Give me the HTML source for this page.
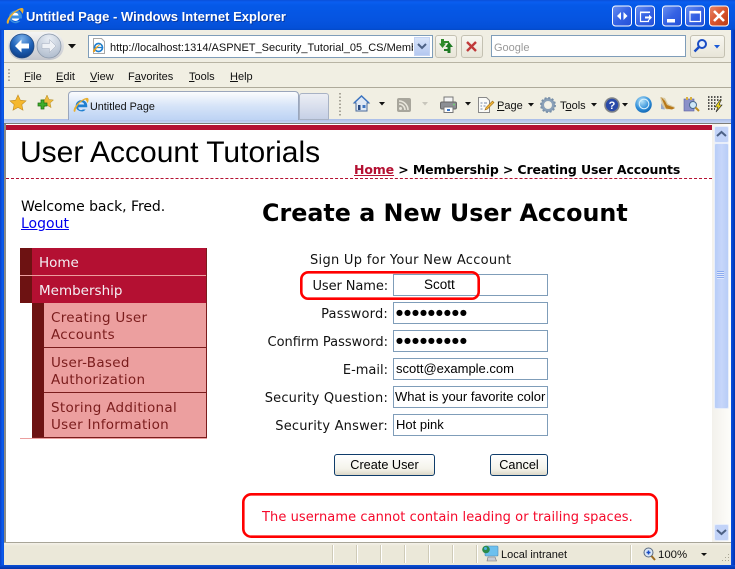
<!DOCTYPE html>
<html><head><meta charset="utf-8"><title>Untitled Page - Windows Internet Explorer</title>
<style>
html,body{margin:0;padding:0;background:#fff}
#w{position:relative;width:735px;height:569px;overflow:hidden;background:#fff;font-family:"Liberation Sans",sans-serif}
.a{position:absolute;white-space:nowrap}
.ui{font:11px/14px "Liberation Sans",sans-serif;color:#111}
.v{font-family:"DejaVu Sans",sans-serif;font-size:13px;line-height:17px;white-space:nowrap;position:absolute}
.lb{right:347px;color:#111}
.in{position:absolute;left:393px;width:153px;height:20px;border:1px solid #7f9db9;background:#fff;font:13px/20px "Liberation Sans",sans-serif;color:#000;white-space:nowrap;overflow:hidden}
.btn{position:absolute;top:454px;height:20px;border:1px solid #0f3d6b;border-radius:3px;background:linear-gradient(#fff,#f4f3ea 70%,#dcd8c8);font:12.7px/20px "Liberation Sans",sans-serif;text-align:center;color:#000}
.nav{position:absolute;font-family:"DejaVu Sans",sans-serif;font-size:13.5px;line-height:17px;color:#7a1c1c;white-space:nowrap;letter-spacing:.3px}
u{text-decoration:underline}
.dots{letter-spacing:1px;font-size:8px;line-height:20px;vertical-align:top}
.sep{position:absolute;top:545px;width:1px;height:18px;background:#fff;border-left:1px solid #cfcbb8}
svg{position:absolute;overflow:visible}
</style></head><body><div id="w">

<!-- Title bar -->
<div class="a" style="left:0;top:0;width:735px;height:30px;background:linear-gradient(#0a50d8 0,#0a5ef0 2px,#0559e8 5px,#0654e0 20px,#0450d8 28px,#0349c8 100%)"></div>
<svg style="left:6px;top:7px" width="18" height="18" viewBox="0 0 18 18"><circle cx="9.500" cy="9.500" r="4.500" fill="#fff"/><path d="M9.500 3.500a6.500 6.500 0 0 0-6.500 6.500A6.500 6.500 0 0 0 14.300 14h-3.300a3 3 0 0 1-5-2.500h10V10A6.300 6.300 0 0 0 9.500 3.500zM6.300 8.500a3.200 3.200 0 0 1 6.300 0z" fill="#3a8fe0"/><path d="M1 16.500C-1 12 9 2 15.500 1c2.500-.5 2.500 3 1 6-.5-1.500-1.500-3-2.500-3.800C15 2.500 15 2.500 13 3.200 8 5 3.500 11 2.800 15.500c0 1-1 1.500-1.800 1z" fill="#eab030"/></svg>
<div class="a" style="left:26px;top:9px;font:bold 13px/16px 'Liberation Sans',sans-serif;color:#fff;letter-spacing:.02px;text-shadow:1px 1px 0 #0a3aa0">Untitled Page - Windows Internet Explorer</div>

<!-- Window buttons -->
<svg style="left:612px;top:5px" width="120" height="22" viewBox="0 0 120 22">
<defs><linearGradient id="bb" x1="0" y1="0" x2="1" y2="1"><stop offset="0" stop-color="#6a90f0"/><stop offset=".5" stop-color="#3562e4"/><stop offset="1" stop-color="#2450d8"/></linearGradient>
<linearGradient id="rb" x1="0" y1="0" x2="1" y2="1"><stop offset="0" stop-color="#e8866a"/><stop offset=".5" stop-color="#d8552e"/><stop offset="1" stop-color="#b83a14"/></linearGradient></defs>
<rect x=".5" y="1" width="19" height="20" rx="3" fill="url(#bb)" stroke="#fff"/>
<path d="M9 7v8l-4-4zM11.500 7v8l4-4z" fill="#fff"/>
<rect x="23.500" y="1" width="19" height="20" rx="3" fill="url(#bb)" stroke="#fff"/>
<path d="M28.500 7.500h9M28.500 7.500v9h8v-2" fill="none" stroke="#fff" stroke-width="1.200"/><path d="M28 6.500h10v1.500H28z" fill="#fff"/><path d="M33 11.500h4v-2l3 3-3 3v-2h-4z" fill="#fff"/>
<rect x="50.500" y="1" width="19" height="20" rx="3" fill="url(#bb)" stroke="#fff"/>
<rect x="55" y="14" width="8" height="3.500" fill="#fff"/>
<rect x="73.500" y="1" width="19" height="20" rx="3" fill="url(#bb)" stroke="#fff"/>
<path d="M78 6.500h10.500v10H78z" fill="none" stroke="#fff" stroke-width="1.200"/><rect x="78" y="6" width="10.500" height="2.500" fill="#fff"/>
<rect x="97.500" y="1" width="19" height="20" rx="3" fill="url(#rb)" stroke="#fff"/>
<path d="M102 6l10 10M112 6l-10 10" stroke="#fff" stroke-width="2.600"/>
</svg>

<!-- Chrome background -->
<div class="a" style="left:4px;top:30px;width:727px;height:32px;background:#f0eee3"></div>
<div class="a" style="left:4px;top:62px;width:727px;height:1px;background:#b8b4a4"></div>
<div class="a" style="left:4px;top:63px;width:727px;height:24px;background:#f1efe3"></div>
<div class="a" style="left:4px;top:87px;width:727px;height:1px;background:#aeaa9a"></div>
<div class="a" style="left:4px;top:88px;width:727px;height:31px;background:#f1efe3"></div>
<div class="a" style="left:4px;top:119px;width:727px;height:4px;background:linear-gradient(#a9bde8,#c8d6f4)"></div>
<div class="a" style="left:4px;top:123px;width:727px;height:1px;background:#7d7d78"></div>

<!-- Window borders -->
<div class="a" style="left:0;top:30px;width:4px;height:539px;background:linear-gradient(90deg,#0a3fc4,#0a5cf0 60%,#0a50d8)"></div>
<div class="a" style="left:4px;top:124px;width:2px;height:420px;background:#8b8b86"></div>
<div class="a" style="left:731px;top:30px;width:4px;height:539px;background:linear-gradient(90deg,#0a50e0,#0232b0)"></div>
<div class="a" style="left:0;top:565px;width:735px;height:4px;background:linear-gradient(#0a50d8,#0232a8)"></div>

<!-- Back/forward -->
<div class="a" style="left:8px;top:32px;width:56px;height:28px;border-radius:14px;background:linear-gradient(#f4f4f4,#c4c6cc)"></div>
<svg style="left:9px;top:33px" width="55" height="27" viewBox="0 0 55 27">
<defs><radialGradient id="bk" cx=".5" cy=".2" r=".9"><stop offset="0" stop-color="#7ab0ea"/><stop offset=".5" stop-color="#1f62b8"/><stop offset="1" stop-color="#0a3478"/></radialGradient>
<radialGradient id="fw" cx=".5" cy=".2" r=".9"><stop offset="0" stop-color="#e8edf4"/><stop offset="1" stop-color="#a9b6c8"/></radialGradient></defs>
<circle cx="13" cy="13" r="12" fill="url(#bk)" stroke="#234a80" stroke-width=".8"/>
<path d="M6 13l6.500-6.500v4H20v5h-7.500v4z" fill="#fff"/>
<circle cx="40" cy="13" r="12" fill="url(#fw)" stroke="#8a98aa" stroke-width=".8"/>
<path d="M47 13l-6.500-6.500v4H33v5h7.500v4z" fill="#eef1f5" stroke="#a0aabc" stroke-width=".5"/>
</svg>
<svg style="left:68px;top:44px" width="10" height="6"><path d="M0 0h8L4 4.500z" fill="#111"/></svg>

<!-- Address bar -->
<div class="a" style="left:88px;top:35px;width:343px;height:21px;border:1px solid #7f9db9;background:#fff"></div>
<svg style="left:91px;top:38px" width="16" height="16" viewBox="0 0 16 16"><path d="M2.500.5h8l3 3v12h-11z" fill="#fff" stroke="#a8a8a8"/><circle cx="7.500" cy="9.500" r="4" fill="none" stroke="#1f7fd0" stroke-width="1.700"/><path d="M4 9.500h7" stroke="#1f7fd0" stroke-width="1.300"/><path d="M2 14c-.5-2.500 5-7.500 8.500-8-3 1.500-5.500 5-6.800 8z" fill="#e8a020"/></svg>
<div class="a ui" style="left:110px;top:41px;width:303px;overflow:hidden;font-size:11px">http://localhost:1314/ASPNET_Security_Tutorial_05_CS/Membership/CreatingUserAccounts.aspx</div>
<div class="a" style="left:414px;top:37px;width:16px;height:19px;background:linear-gradient(#d8e4fa,#b4c8f0);border:1px solid #c3d3f3;box-sizing:border-box"></div>
<svg style="left:417px;top:43px" width="10" height="8"><path d="M1 1l4 4 4-4" fill="none" stroke="#4d6185" stroke-width="2"/></svg>
<!-- refresh/stop -->
<div class="a" style="left:435px;top:35px;width:20px;height:21px;border:1px solid #c4c1b2;border-radius:3px;background:linear-gradient(#f8f7f1,#e8e5d8)"></div>
<svg style="left:438px;top:38px" width="16" height="16" viewBox="0 0 16 16"><path d="M3 1h3v2h5v2H6.500v.5H8L4.500 10 1 5.500h2z" fill="#2f8a2a"/><path d="M11 4l4 5h-2.500v6h-3V13H6v-2h3.500V9H7.500z" fill="#1f7a24"/></svg>
<div class="a" style="left:461px;top:35px;width:20px;height:21px;border:1px solid #c4c1b2;border-radius:3px;background:linear-gradient(#f8f7f1,#e8e5d8)"></div>
<svg style="left:466px;top:41px" width="12" height="12"><path d="M1 1l9 9M10 1l-9 9" stroke="#c03a3a" stroke-width="2.400"/></svg>
<!-- Search -->
<div class="a" style="left:491px;top:35px;width:193px;height:20px;border:1px solid #7f9db9;background:#fff"></div>
<div class="a ui" style="left:494px;top:41px;color:#9a9a9a;font-size:11px">Google</div>
<div class="a" style="left:690px;top:35px;width:20px;height:21px;border:1px solid #c4c1b2;border-radius:3px 0 0 3px;background:linear-gradient(#f8f7f1,#e8e5d8)"></div>
<div class="a" style="left:711px;top:35px;width:13px;height:21px;border:1px solid #c4c1b2;border-left:0;border-radius:0 3px 3px 0;background:linear-gradient(#f8f7f1,#e8e5d8)"></div>
<svg style="left:693px;top:38px" width="15" height="15" viewBox="0 0 15 15"><circle cx="9" cy="6" r="4" fill="#e8f0fc" stroke="#1a4cc4" stroke-width="2"/><path d="M6 9l-4.500 4.500" stroke="#1a4cc4" stroke-width="2.400"/></svg>
<svg style="left:714px;top:45px" width="8" height="5"><path d="M0 0h6L3 3.500z" fill="#1a5ad8"/></svg>

<!-- Menu row -->
<svg style="left:8px;top:69px" width="3" height="15"><path d="M1 0v14" stroke="#a8a498" stroke-width="2" stroke-dasharray="1.500 2"/></svg>
<div class="a ui" style="left:24px;top:70px"><u>F</u>ile</div>
<div class="a ui" style="left:56px;top:70px"><u>E</u>dit</div>
<div class="a ui" style="left:90px;top:70px"><u>V</u>iew</div>
<div class="a ui" style="left:128px;top:70px">F<u>a</u>vorites</div>
<div class="a ui" style="left:189px;top:70px"><u>T</u>ools</div>
<div class="a ui" style="left:230px;top:70px"><u>H</u>elp</div>

<!-- Tab row -->
<svg style="left:10px;top:95px" width="16" height="16" viewBox="0 0 16 16"><path d="M8 0l2.400 5.200 5.600.6-4.200 3.800 1.200 5.600L8 12.400 3 15.200l1.200-5.600L0 5.800l5.600-.6z" fill="#f5b82e" stroke="#c08a20" stroke-width=".6"/></svg>
<svg style="left:37px;top:95px" width="17" height="16" viewBox="0 0 17 16"><path d="M10 0l2 4.500 4.500.5-3.400 3 1 4.600L10 10.200 6 12.600l1-4.600-3.400-3L8 4.500z" fill="#eeb93a" stroke="#b08a20" stroke-width=".5"/><path d="M4 5h3v3h3v3H7v3H4v-3H1V8h3z" fill="#3fae2a" stroke="#1d6e12" stroke-width=".7"/></svg>
<div class="a" style="left:68px;top:91px;width:229px;height:28px;border:1px solid #9aa6bc;border-bottom:0;border-radius:4px 4px 0 0;background:linear-gradient(#fbfcfe,#d6e4f8 50%,#bdd3f4)"></div>
<svg style="left:73px;top:97px" width="16" height="16" viewBox="0 0 18 18"><path d="M9.500 3.500a6.500 6.500 0 0 0-6.500 6.500A6.500 6.500 0 0 0 14.300 14h-3.300a3 3 0 0 1-5-2.500h10V10A6.300 6.300 0 0 0 9.500 3.500zM6.300 8.500a3.200 3.200 0 0 1 6.300 0z" fill="#1f7fd0"/><path d="M1 16.500C-1 12 9 2 15.500 1c2.500-.5 2.500 3 1 6-.5-1.500-1.500-3-2.500-3.800C15 2.500 15 2.500 13 3.200 8 5 3.500 11 2.800 15.500c0 1-1 1.500-1.800 1z" fill="#e8b030"/></svg>
<div class="a ui" style="left:90px;top:100px;font-size:10.8px">Untitled Page</div>
<div class="a" style="left:299px;top:93px;width:28px;height:25px;border:1px solid #a8b2c4;border-radius:3px 3px 0 0;background:linear-gradient(#eceef4,#c6d0e6)"></div>
<svg style="left:339px;top:93px" width="3" height="24"><path d="M1 0v24" stroke="#a8a498" stroke-width="2" stroke-dasharray="1.500 2"/></svg>

<!-- Right toolbar icons -->
<svg style="left:353px;top:95px" width="17" height="17" viewBox="0 0 17 17"><path d="M8.500 1L1 8h2v8h11V8h2z" fill="#dfe8f4" stroke="#4a6a9a"/><path d="M1 8l7.500-7L16 8" fill="none" stroke="#3c74c0" stroke-width="1.500"/><rect x="5" y="10" width="2.500" height="5" fill="#2a4a80"/><rect x="9.500" y="10" width="3" height="3" fill="#3c74c0"/></svg>
<svg style="left:379px;top:102px" width="7" height="5"><path d="M0 0h6L3 3.500z" fill="#111"/></svg>
<svg style="left:397px;top:98px" width="14" height="14" viewBox="0 0 14 14"><rect width="14" height="14" rx="2" fill="#a8a69c"/><circle cx="3.500" cy="10.500" r="1.500" fill="#e8e6dc"/><path d="M2 6a6 6 0 0 1 6 6M2 3a9 9 0 0 1 9 9" fill="none" stroke="#e8e6dc" stroke-width="1.600"/></svg>
<svg style="left:422px;top:102px" width="7" height="5"><path d="M0 0h6L3 3.500z" fill="#c8c6bc"/></svg>
<svg style="left:440px;top:97px" width="17" height="16" viewBox="0 0 17 16"><rect x="4" y="0" width="9" height="5" fill="#f4f4f4" stroke="#777"/><rect x=".5" y="5" width="16" height="7" rx="1.500" fill="#8c8f94" stroke="#666"/><rect x="4" y="10" width="9" height="5.500" fill="#fff" stroke="#777"/><circle cx="14" cy="7.500" r=".9" fill="#6de06d"/><rect x="7" y="12" width="3" height="2" fill="#3b78c8"/></svg>
<svg style="left:465px;top:102px" width="7" height="5"><path d="M0 0h6L3 3.500z" fill="#111"/></svg>
<svg style="left:478px;top:97px" width="17" height="16" viewBox="0 0 17 16"><path d="M.5.500h8l3 3v12H.5z" fill="#fbfbf8" stroke="#8a8a8a"/><path d="M2.500 6h2M6 6h3M2.500 9h1.500M5.500 9h2M2.500 12h2" stroke="#7a8aa8"/><path d="M7 13l1-2.500L14.500 4l1.500 1.500L9.500 12z" fill="#f0b63c" stroke="#a06a10" stroke-width=".6"/></svg>
<div class="a ui" style="left:497px;top:99px"><u>P</u>age</div>
<svg style="left:528px;top:103px" width="7" height="5"><path d="M0 0h6L3 3.500z" fill="#111"/></svg>
<svg style="left:540px;top:97px" width="16" height="16" viewBox="0 0 16 16"><circle cx="8" cy="8" r="5.500" fill="none" stroke="#8aa0b8" stroke-width="3"/><circle cx="8" cy="8" r="7" fill="none" stroke="#7a90a8" stroke-width="2" stroke-dasharray="2 1.660"/><circle cx="8" cy="8" r="3" fill="#f4f2e8"/></svg>
<div class="a ui" style="left:560px;top:99px">T<u>o</u>ols</div>
<svg style="left:591px;top:103px" width="7" height="5"><path d="M0 0h6L3 3.500z" fill="#111"/></svg>
<svg style="left:604px;top:97px" width="16" height="16" viewBox="0 0 16 16"><circle cx="8" cy="8" r="7" fill="#2a4aa8" stroke="#808488" stroke-width="1.600"/><text x="8" y="12" text-anchor="middle" font-family="Liberation Sans" font-weight="bold" font-size="11" fill="#fff">?</text></svg>
<svg style="left:622px;top:103px" width="7" height="5"><path d="M0 0h6L3 3.500z" fill="#111"/></svg>
<svg style="left:635px;top:96px" width="17" height="17" viewBox="0 0 16 16"><defs><radialGradient id="gl" cx=".4" cy=".3" r=".8"><stop offset="0" stop-color="#b8e4f8"/><stop offset=".6" stop-color="#2c8cd8"/><stop offset="1" stop-color="#0a5ca8"/></radialGradient></defs><circle cx="8" cy="8" r="7.800" fill="url(#gl)"/><circle cx="8.500" cy="7.500" r="4.500" fill="none" stroke="#d8f0fc" stroke-width="1"/></svg>
<svg style="left:659px;top:96px" width="17" height="15" viewBox="0 0 17 15"><path d="M1 1l5 1 3 6 7 3-2 2-6 .5-4-1.500z" fill="#d8c8a0"/><path d="M2 1l4 4 2 4 8 3-3 1.500-6-1z" fill="#b87818"/><path d="M2 7v6l4 .5z" fill="#98a8c8"/></svg>
<svg style="left:683px;top:96px" width="17" height="16" viewBox="0 0 17 16"><rect x="1" y="3" width="10" height="12" fill="#8a90c8" stroke="#5a60a0" stroke-width=".6"/><rect x="3" y="1" width="2" height="3" fill="#d8b040"/><rect x="7" y="1" width="2" height="3" fill="#d8b040"/><circle cx="10" cy="9" r="3.500" fill="#cfe8f8" stroke="#4a6a90"/><path d="M12.500 11.500l3.500 3.500" stroke="#c09020" stroke-width="2"/></svg>
<svg style="left:707px;top:96px" width="17" height="17" viewBox="0 0 17 17"><path d="M1 1h15M1 4h15M1 7h8M1 10h7M1 13h7" stroke="#222" stroke-width="1.500" stroke-dasharray="1.500 1.500"/><path d="M13 4l-5 7h3l-2 5 6-7h-3l2-5z" fill="#f5e020" stroke="#222" stroke-width=".6"/></svg>

<!-- Page content -->
<div class="a" style="left:6px;top:125px;width:706px;height:5px;background:#b41032"></div>
<div class="a" style="left:20px;top:134px;font:30px/37px 'Liberation Sans',sans-serif;color:#000">User Account Tutorials</div>
<div class="a" style="left:354px;top:161px;font:bold 12.5px/17px 'DejaVu Sans',sans-serif;color:#000;letter-spacing:-.13px;white-space:nowrap"><u style="color:#b41032">Home</u> &gt; Membership &gt; Creating User Accounts</div>
<div class="a" style="left:6px;top:178px;width:706px;height:0;border-top:1px dashed #b41032"></div>

<div class="v" style="left:21px;top:199px;font-size:14px;line-height:17px;letter-spacing:-.05px">Welcome back, Fred.</div>
<div class="v" style="left:21px;top:216px;font-size:14px;line-height:17px;color:#00e;text-decoration:underline">Logout</div>

<!-- Nav -->
<div class="a" style="left:20px;top:248px;width:187px;height:55px;background:#b41032"></div>
<div class="a" style="left:20px;top:248px;width:12px;height:55px;background:#6d1212"></div>
<div class="a" style="left:20px;top:275px;width:187px;height:1px;background:#ec9f9f"></div>
<div class="a" style="left:206px;top:248px;width:1px;height:55px;background:#7a1c1c"></div>
<div class="nav" style="left:39px;top:255px;color:#f4f0f4;letter-spacing:0">Home</div>
<div class="nav" style="left:39px;top:283px;color:#f4f0f4;letter-spacing:0">Membership</div>
<div class="a" style="left:32px;top:303px;width:175px;height:135px;background:#ec9f9f"></div>
<div class="a" style="left:32px;top:303px;width:12px;height:135px;background:#6d1212"></div>
<div class="a" style="left:206px;top:303px;width:1px;height:135px;background:#7a1c1c"></div>
<div class="a" style="left:44px;top:347px;width:163px;height:1px;background:#7a1c1c"></div>
<div class="a" style="left:44px;top:392px;width:163px;height:1px;background:#7a1c1c"></div>
<div class="a" style="left:32px;top:437px;width:175px;height:1px;background:#7a1c1c"></div>
<div class="a" style="left:20px;top:438px;width:187px;height:1px;background:#ec9f9f"></div>
<div class="nav" style="left:51px;top:310px">Creating User<br>Accounts</div>
<div class="nav" style="left:51px;top:355px">User-Based<br>Authorization</div>
<div class="nav" style="left:51px;top:400px">Storing Additional<br>User Information</div>

<!-- Form -->
<div class="a" style="left:262px;top:198px;font:bold 23.800px/30px 'DejaVu Sans',sans-serif;color:#000">Create a New User Account</div>
<div class="v" style="left:310px;top:252px;color:#111;letter-spacing:.29px">Sign Up for Your New Account</div>
<div class="v lb" style="top:278px;letter-spacing:-.1px">User Name:</div>
<div class="v lb" style="top:306px;letter-spacing:.2px">Password:</div>
<div class="v lb" style="top:334px">Confirm Password:</div>
<div class="v lb" style="top:362px">E-mail:</div>
<div class="v lb" style="top:390px;letter-spacing:.18px">Security Question:</div>
<div class="v lb" style="top:418px;letter-spacing:.2px">Security Answer:</div>

<div class="in" style="top:274px;text-indent:30px;font-size:13.500px">Scott</div>
<div class="in" style="top:302px;text-indent:2px;font-family:'DejaVu Sans',sans-serif"><span class="dots">●●●●●●●●●</span></div>
<div class="in" style="top:330px;text-indent:2px;font-family:'DejaVu Sans',sans-serif"><span class="dots">●●●●●●●●●</span></div>
<div class="in" style="top:358px;text-indent:2px">scott@example.com</div>
<div class="in" style="top:386px;text-indent:1px">What is your favorite color</div>
<div class="in" style="top:414px;text-indent:2px">Hot pink</div>

<div class="btn" style="left:334px;width:99px">Create User</div>
<div class="btn" style="left:490px;width:56px">Cancel</div>

<div class="v" style="left:262px;top:509px;color:#f5082a;letter-spacing:.07px">The username cannot contain leading or trailing spaces.</div>

<!-- Red annotation boxes -->
<svg style="left:0;top:0" width="735" height="569">
<rect x="301.300" y="272.300" width="177.400" height="26.400" rx="7" fill="none" stroke="#f00" stroke-width="2.600"/>
<rect x="243.300" y="494.300" width="413.400" height="42.400" rx="8" fill="none" stroke="#f00" stroke-width="2.600"/>
</svg>

<!-- Scrollbar -->
<div class="a" style="left:712px;top:124px;width:19px;height:418px;background:linear-gradient(90deg,#f3f1ec,#fdfdfa)"></div>
<div class="a" style="left:714px;top:126px;width:13px;height:15px;border:1px solid #e8eefa;border-radius:2px;background:#c2d3f8"></div>
<svg style="left:716px;top:130px" width="11" height="8"><path d="M1 6l4.500-4L10 6" fill="none" stroke="#4d6185" stroke-width="2"/></svg>
<div class="a" style="left:714px;top:143px;width:13px;height:264px;border:1px solid #e8eefa;border-radius:2px;background:linear-gradient(90deg,#b8cdf7,#c6d6fa 50%,#b8cdf7)"></div>
<div class="a" style="left:717px;top:271px;width:7px;height:8px;background:repeating-linear-gradient(#8cabf0 0,#8cabf0 1px,#e0e8fb 1px,#e0e8fb 2px)"></div>
<div class="a" style="left:714px;top:524px;width:13px;height:15px;border:1px solid #e8eefa;border-radius:2px;background:#c2d3f8"></div>
<svg style="left:716px;top:529px" width="11" height="8"><path d="M1 1l4.500 4L10 1" fill="none" stroke="#4d6185" stroke-width="2"/></svg>

<!-- Status bar -->
<div class="a" style="left:4px;top:542px;width:727px;height:1px;background:#a8a598"></div>
<div class="a" style="left:4px;top:543px;width:727px;height:22px;background:linear-gradient(#f4f2ea 0,#ebe8d9 3px,#ebe8d9)"></div>
<div class="sep" style="left:332px"></div>
<div class="sep" style="left:356px"></div>
<div class="sep" style="left:380px"></div>
<div class="sep" style="left:404px"></div>
<div class="sep" style="left:428px"></div>
<div class="sep" style="left:452px"></div>
<div class="sep" style="left:476px"></div>
<div class="sep" style="left:630px"></div>
<svg style="left:482px;top:545px" width="17" height="17" viewBox="0 0 17 17"><rect x="3" y="1" width="13" height="10" rx="1" fill="#6cc0ee" stroke="#4a88b8" stroke-width=".6"/><path d="M6 12h7l1.500 4H5z" fill="#c8ccd4" stroke="#777" stroke-width=".6"/><circle cx="4" cy="4.500" r="3.800" fill="#2a8a4a"/><circle cx="3.500" cy="3.500" r="1.500" fill="#4ab0e0"/></svg>
<div class="a ui" style="left:501px;top:548px">Local intranet</div>
<svg style="left:643px;top:547px" width="13" height="14" viewBox="0 0 13 14"><circle cx="5.500" cy="5.500" r="4.500" fill="#dbe8f8" stroke="#5a6a80"/><path d="M3.500 5.500h4M5.500 3.500v4" stroke="#1a4cc4" stroke-width="1.500"/><path d="M8.500 9l3.500 4" stroke="#9a6a20" stroke-width="2"/></svg>
<div class="a ui" style="left:658px;top:548px;font-size:11.400px">100%</div>
<svg style="left:701px;top:553px" width="7" height="4"><path d="M0 0h6L3 3z" fill="#111"/></svg>
<svg style="left:719px;top:553px" width="11" height="11"><path d="M9 1h1v1H9zM6 4h1v1H6zM9 4h1v1H9zM3 7h1v1H3zM6 7h1v1H6zM9 7h1v1H9z" fill="#a8a594"/></svg>
</div></body></html>
